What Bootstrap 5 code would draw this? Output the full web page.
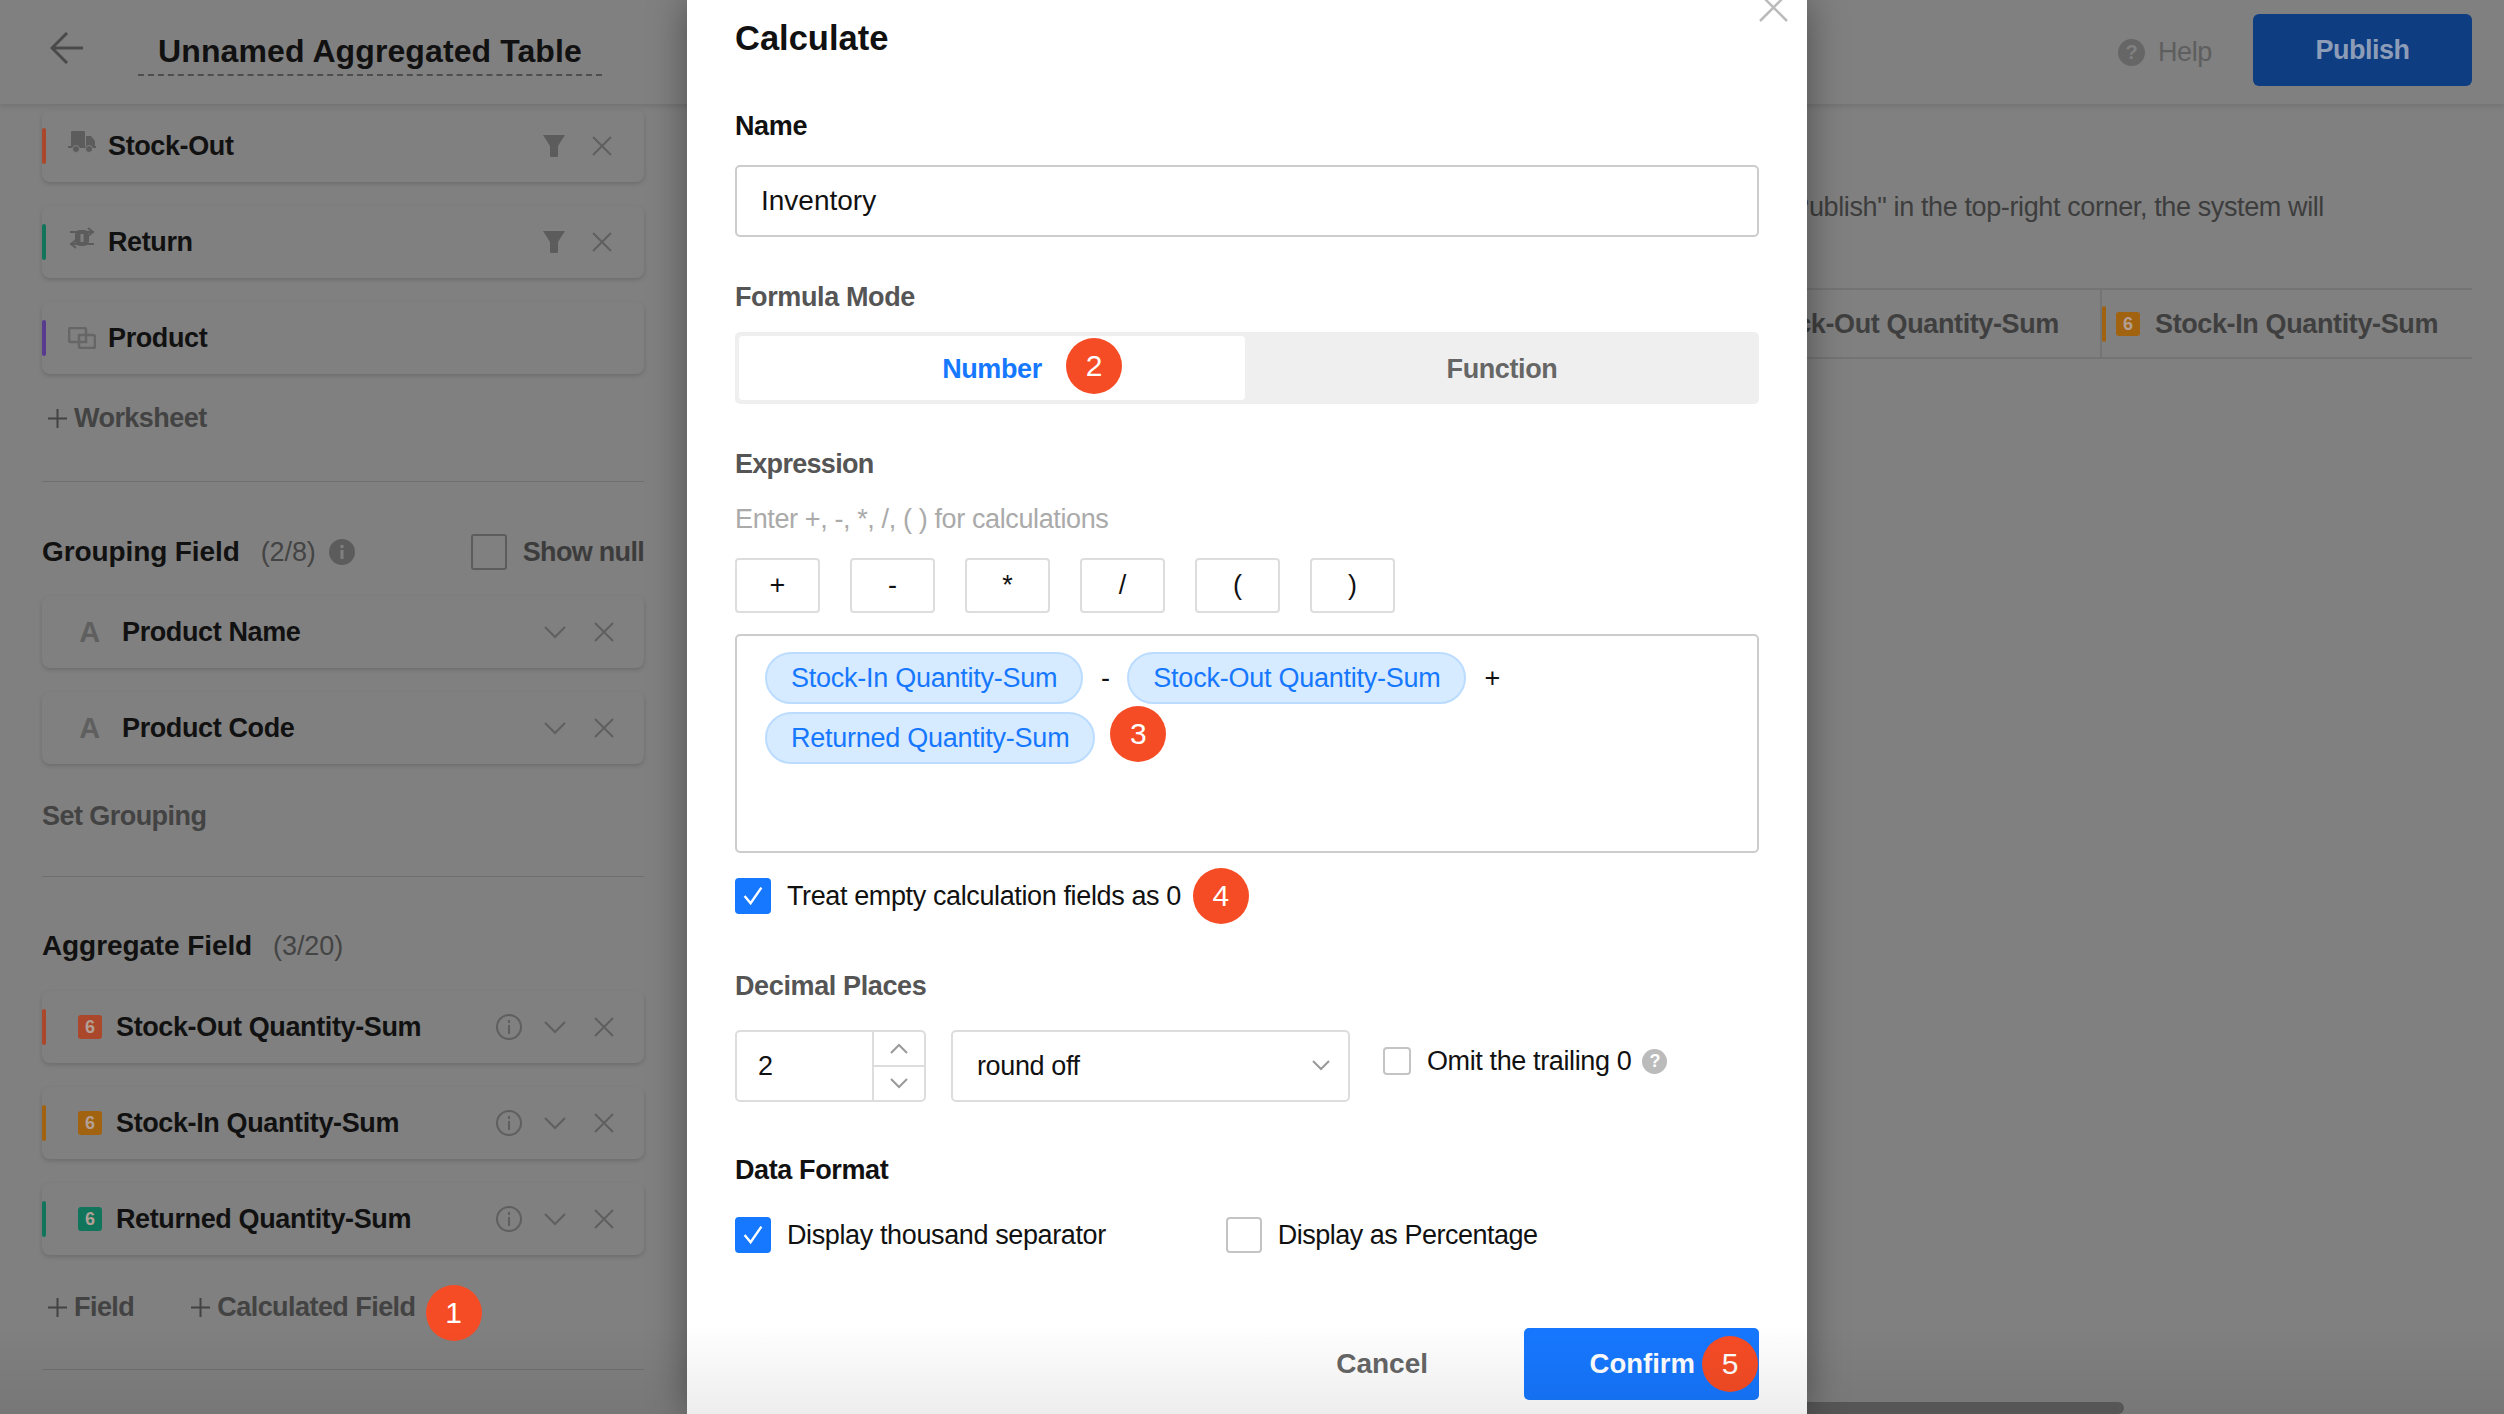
<!DOCTYPE html>
<html lang="en">
<head>
  <meta charset="UTF-8">
  <meta name="viewport" content="width=device-width, initial-scale=1.0">
  <title>Unnamed Aggregated Table</title>
  <link rel="stylesheet" href="https://cdn.jsdelivr.net/npm/bootstrap@5.3.0/dist/css/bootstrap.min.css" />
  <style>
    html, body { width: 2504px; height: 1414px; overflow: hidden; }
    body {
      position: relative;
      font-family: "Liberation Sans", Arial, sans-serif;
      font-size: 27px;
      line-height: 36px;
      letter-spacing: -.38px;
      background: #808080;
      color: #111;
    }

    /* top bar */
    .top-bar {
      height: 104px;
      padding: 0 32px 0 50px;
      box-shadow: 0 2px 6px rgba(0, 0, 0, .12);
      position: relative;
      z-index: 1;
    }
    .back-arrow { width: 33px; height: 32px; margin-top: -9px; margin-right: 55px; }
    .table-title {
      width: 464px;
      height: 48px;
      line-height: 46px;
      font-size: 32px;
      font-weight: 700;
      letter-spacing: .1px;
      text-align: center;
      border-bottom: 2px dashed #4e4e4e;
    }
    .help-link { color: #5e5e5e; margin-right: 41px; gap: 13px; }
    .help-dot {
      width: 27px; height: 27px;
      border-radius: 50%;
      background: #666;
      color: #808080;
      font-size: 20px;
      font-weight: 700;
      line-height: 27px;
      text-align: center;
    }
    .publish-btn {
      width: 219px; height: 72px;
      margin-top: -4px;
      background: #0f3d82;
      border: 0;
      border-radius: 6px;
      color: #8d9db8;
      font-size: 27px;
      font-weight: 700;
      letter-spacing: -.5px;
    }

    /* left column */
    .side-col { width: 687px; flex: none; padding: 6px 43px 0 42px; }
    .field-card {
      height: 72px;
      margin-bottom: 24px;
      background: #808080;
      border: 0;
      border-radius: 8px;
      box-shadow: 0 2px 4px rgba(0, 0, 0, .16);
      font-weight: 700;
      flex-direction: row;
      align-items: center;
    }
    .field-list .field-card:last-child { margin-bottom: 0; }
    .edge-bar { width: 4px; height: 36px; flex: none; border-radius: 2px; }
    .edge-red { background: #ab472b; }
    .edge-green { background: #11755c; }
    .edge-purple { background: #583b8e; }
    .edge-orange { background: #a1630f; }
    .src-icon { width: 28px; height: 22px; flex: none; margin: 0 12px 0 22px; }
    .src-up { margin-top: -8px; }
    .type-a { width: 21px; margin: 0 22px 0 37px; color: #5f5f5f; font-size: 29px; text-align: center; }
    .num-chip {
      width: 24px; height: 24px;
      flex: none;
      border-radius: 3px;
      font-size: 18px;
      font-weight: 700;
      letter-spacing: 0;
      line-height: 24px;
      text-align: center;
      color: #b39f95;
    }
    .chip-red { background: #ab472b; }
    .chip-orange { background: #a1630f; }
    .chip-green { background: #11755c; }
    .field-card .num-chip { margin: 0 14px 0 32px; }
    .card-tools { margin-left: auto; padding-right: 30px; gap: 28px; }
    .card-tools.filter-tools { padding-right: 32px; gap: 26px; }
    .tool-x { width: 20px; height: 20px; }
    .tool-chev { width: 22px; height: 13px; }
    .tool-funnel { width: 22px; height: 22px; margin-right: 1px; }
    .tool-info { width: 26px; height: 26px; margin-right: -6px; }
    .add-link { color: #434343; font-weight: 700; letter-spacing: -.55px; }
    .add-plus { width: 19px; height: 19px; margin: 0 7px 0 6px; }
    .add-plus.second { margin-left: 57px; }
    .side-rule { border-top: 1px solid #6f6f6f; }
    .head-row { height: 36px; margin-top: 52px; margin-bottom: 26px; font-size: 28px; font-weight: 700; letter-spacing: -.1px; }
    .head-row.tight { margin-top: 51px; margin-bottom: 27px; }
    .head-count { color: #444; margin-left: 21px; font-size: 27px; font-weight: 400; }
    .solid-info { width: 26px; height: 26px; margin-left: 13px; }
    .show-null { margin-left: auto; color: #3c3c3c; gap: 16px; font-size: 27px; letter-spacing: -.7px; }
    .null-box { width: 36px; height: 36px; border: 2px solid #5c5c5c; border-radius: 3px; }
    .work-link { margin-top: 26px; }
    .work-rule { margin-top: 45px; }
    .group-link { margin-top: 34px; }
    .group-rule { margin-top: 42px; }
    .agg-links { margin-top: 34px; height: 36px; }
    .agg-rule { margin-top: 44px; }

    /* right column */
    .main-col { flex: 1; min-width: 0; overflow: hidden; padding-top: 85px; }
    .intro-line { padding-right: 180px; text-align: right; color: #3d3d3d; white-space: nowrap; }
    .col-heads {
      height: 71px;
      margin: 63px 32px 0 0;
      border-top: 2px solid #747474;
      border-bottom: 2px solid #747474;
      font-weight: 700;
      color: #3f3f3f;
      justify-content: flex-end;
    }
    .col-head { width: 372px; flex: none; border-left: 2px solid #747474; white-space: nowrap; }
    .col-head .num-chip { margin: 0 15px 0 10px; }
    .col-head-first { padding-right: 41px; }
    .page-scroll {
      position: absolute;
      left: 1700px; bottom: 0;
      width: 424px; height: 12px;
      border-radius: 0 6px 6px 0;
      background: #5c5c5c;
    }

    /* dialog */
    .calc-dialog {
      position: absolute;
      left: 687px; top: 0;
      width: 1120px; height: 1414px;
      padding: 20px 48px 0;
      background: #fff;
      border: 0;
      border-radius: 0;
      box-shadow: 0 0 36px rgba(0, 0, 0, .4);
      z-index: 2;
      color: #111;
    }
    .dialog-x { position: absolute; right: 19px; top: -7px; width: 29px; height: 29px; }
    .dialog-title { font-size: 34.5px; font-weight: 700; letter-spacing: 0; }
    .dlg-label { font-weight: 700; }
    .dlg-label.soft { color: #555; }
    .name-label { margin-top: 52px; }
    .form-control.name-box {
      height: 72px;
      margin-top: 21px;
      padding: 16px 24px;
      border: 2px solid #ccc;
      border-radius: 5px;
      font-size: 28px;
      line-height: 36px;
      letter-spacing: 0;
      color: #111;
    }
    .mode-label { margin-top: 42px; }
    .mode-switch { height: 72px; margin-top: 17px; padding: 4px; background: #efefef; border-radius: 5px; font-weight: 700; }
    .mode-on {
      position: relative;
      width: 506px;
      padding-top: 2px;
      background: #fff;
      border-radius: 4px;
      color: #1677ff;
    }
    .mode-off { flex: 1; padding: 2px 0 0 4px; color: #666; }
    .anno {
      width: 56px; height: 56px;
      flex: none;
      border-radius: 50%;
      background: #f64c25;
      color: #fff;
      font-size: 30px;
      font-weight: 400;
      letter-spacing: 0;
      line-height: 56px;
      text-align: center;
    }
    .anno-one { margin: -4px 0 -16px 10px; }
    .anno-two { position: absolute; left: 327px; top: 2px; }
    .expr-label { margin-top: 42px; letter-spacing: -.7px; }
    .expr-hint { margin-top: 19px; color: #aaa; }
    .op-row { margin-top: 21px; gap: 30px; }
    .op-btn {
      width: 85px; height: 55px;
      padding: 0;
      background: #fff;
      border: 2px solid #ddd;
      border-radius: 4px;
      font-size: 27px;
      line-height: 1;
      color: #111;
    }
    .expr-box {
      height: 219px;
      margin-top: 21px;
      padding: 16px 28px;
      border: 2px solid #ccc;
      border-radius: 5px;
      row-gap: 8px;
      align-content: flex-start;
    }
    .expr-tag {
      height: 52px;
      padding: 0 24px;
      background: #d6ebff;
      border: 2px solid #bcdcff;
      border-radius: 26px;
      color: #1677ff;
      letter-spacing: -.25px;
      line-height: 48px;
      white-space: nowrap;
    }
    .expr-op { width: 44px; text-align: center; }
    .expr-op.last { width: auto; margin-left: 18px; }
    .anno-three { margin: -10px 0 -10px 15px; transform: translateY(-4px); }
    .form-check-input.blue-check {
      width: 36px; height: 36px;
      margin: 0;
      flex: none;
      border: 2px solid #c4c4c4;
      border-radius: 4px;
      float: none;
    }
    .form-check-input.blue-check:checked {
      background-color: #1677ff;
      border-color: #1677ff;
      background-size: 24px;
      background-image: url("data:image/svg+xml,%3csvg xmlns='http://www.w3.org/2000/svg' viewBox='0 0 20 20'%3e%3cpath fill='none' stroke='%23fff' stroke-width='2' d='M3 10l5 6 9-13'/%3e%3c/svg%3e");
    }
    .form-check-input.blue-check.small-box { width: 28px; height: 28px; }
    .treat-row { margin-top: 25px; gap: 16px; }
    .anno-four { margin: -10px 0 -10px -4px; }
    .decimal-label { margin-top: 54px; }
    .decimal-row { margin-top: 26px; height: 72px; }
    .stepper { width: 191px; border: 2px solid #ddd; border-radius: 5px; }
    .stepper-value { flex: 1; padding-left: 21px; align-self: center; }
    .stepper-btns { width: 52px; border-left: 2px solid #ddd; }
    .stepper-btn { flex: 1; }
    .stepper-btn + .stepper-btn { border-top: 2px solid #ddd; }
    .stepper-btn svg { width: 18px; height: 11px; }
    .form-select.round-box {
      width: 399px; height: 72px;
      margin-left: 25px;
      padding: 0 18px 0 24px;
      background-image: none;
      border: 2px solid #ddd;
      border-radius: 5px;
      font-size: 27px;
      line-height: 36px;
      color: #111;
    }
    .round-box svg { width: 18px; height: 11px; margin-top: -2px; }
    .omit-row { margin: -10px 0 0 33px; gap: 16px; }
    .help-soft { width: 25px; height: 25px; margin-left: -5px; border-radius: 50%; background: #bbb; color: #fff; font-size: 18px; font-weight: 700; line-height: 25px; text-align: center; }
    .format-label { margin-top: 50px; }
    .format-row { margin-top: 29px; }
    .format-item { gap: 16px; }
    .format-item + .format-item { margin-left: 120px; gap: 16px; letter-spacing: -.5px; }
    .dialog-foot { margin-top: 75px; }
    .cancel-btn { margin-right: 96px; padding: 0; border: 0; color: #666; font-size: 28px; font-weight: 700; letter-spacing: 0; }
    .confirm-btn {
      width: 235px; height: 72px;
      padding: 0 1px 0 0;
      gap: 7px;
      background: #1677ff;
      border: 0;
      border-radius: 5px;
      color: #fff;
      font-size: 27.5px;
      font-weight: 700;
      letter-spacing: 0;
    }
    .page-fade {
      position: absolute;
      left: 0; right: 0; bottom: 0;
      height: 90px;
      background: linear-gradient(to bottom, rgba(0, 0, 0, 0), rgba(0, 0, 0, .07));
      pointer-events: none;
      z-index: 3;
    }
  </style>
</head>
<body>
<!-- Top bar -->
<header class="top-bar d-flex align-items-center">
  <svg class="back-arrow" viewBox="0 0 33 32" fill="none" stroke="#4a4a4a" stroke-width="3"><path d="M33 16H2M17 1L2 16l15 15"/></svg>
  <div class="table-title">Unnamed Aggregated Table</div>
  <div class="help-link d-flex align-items-center ms-auto"><span class="help-dot">?</span><span>Help</span></div>
  <button class="btn publish-btn" type="button">Publish</button>
</header>

<div class="d-flex">
  <!-- Left settings column -->
  <aside class="side-col">
    <div class="field-list">
      <div class="card field-card">
        <span class="edge-bar edge-red"></span>
        <svg class="src-icon src-up" viewBox="0 0 28 22" fill="#5c5c5c"><rect x="3" y="0" width="14" height="16" rx="1"/><path d="M18 5h5l4 5v6h-9z"/><rect x="0" y="15" width="28" height="2"/><circle cx="8" cy="18" r="3.5" stroke="#808080"/><circle cx="21" cy="18" r="3.5" stroke="#808080"/></svg>
        <span>Stock-Out</span>
        <div class="card-tools filter-tools d-flex align-items-center">
          <svg class="tool-funnel" viewBox="0 0 22 22" fill="#5c5c5c"><path d="M0 0h22l-7 11v10a1 1 0 0 1-1 1H8a1 1 0 0 1-1-1V11z"/></svg>
          <svg class="tool-x" viewBox="0 0 20 20" stroke="#5f5f5f" stroke-width="2"><path d="M1 1l18 18M19 1L1 19"/></svg>
        </div>
      </div>
      <div class="card field-card">
        <span class="edge-bar edge-green"></span>
        <svg class="src-icon src-up" viewBox="0 0 28 22" fill="#5c5c5c"><rect x="7" y="3" width="14" height="16" rx="5"/><rect x="12.5" y="7" width="3" height="8" fill="#808080"/><path d="M2 5h22M20 1l5 4-5 4M26 17H4M8 13l-5 4 5 4" fill="none" stroke="#5c5c5c" stroke-width="2"/></svg>
        <span>Return</span>
        <div class="card-tools filter-tools d-flex align-items-center">
          <svg class="tool-funnel" viewBox="0 0 22 22" fill="#5c5c5c"><path d="M0 0h22l-7 11v10a1 1 0 0 1-1 1H8a1 1 0 0 1-1-1V11z"/></svg>
          <svg class="tool-x" viewBox="0 0 20 20" stroke="#5f5f5f" stroke-width="2"><path d="M1 1l18 18M19 1L1 19"/></svg>
        </div>
      </div>
      <div class="card field-card">
        <span class="edge-bar edge-purple"></span>
        <svg class="src-icon" viewBox="0 0 28 22" fill="none" stroke="#666" stroke-width="2.6"><path d="M11 15H3a2 2 0 0 1-2-2V3a2 2 0 0 1 2-2h13a2 2 0 0 1 2 2v5"/><path d="M18 8h7a2 2 0 0 1 2 2v9a2 2 0 0 1-2 2H13a2 2 0 0 1-2-2V8h7v7h-7"/></svg>
        <span>Product</span>
      </div>
    </div>
    <div class="add-link work-link d-flex align-items-center">
      <svg class="add-plus" viewBox="0 0 19 19" stroke="#434343" stroke-width="2"><path d="M9.5 0v19M0 9.5h19"/></svg><span>Worksheet</span>
    </div>
    <div class="side-rule work-rule"></div>

    <div class="head-row d-flex align-items-center">
      <span>Grouping Field</span><span class="head-count">(2/8)</span>
      <svg class="solid-info" viewBox="0 0 26 26"><circle cx="13" cy="13" r="13" fill="#5c5c5c"/><path d="M11.5 11h3v9h-3zM11.5 6h3v3h-3z" fill="#808080"/></svg>
      <div class="show-null d-flex align-items-center"><span class="null-box"></span><span>Show null</span></div>
    </div>
    <div class="field-list">
      <div class="card field-card">
        <span class="type-a">A</span><span>Product Name</span>
        <div class="card-tools d-flex align-items-center">
          <svg class="tool-chev" viewBox="0 0 22 13" fill="none" stroke="#5f5f5f" stroke-width="2"><path d="M1 1l10 10L21 1"/></svg>
          <svg class="tool-x" viewBox="0 0 20 20" stroke="#5f5f5f" stroke-width="2"><path d="M1 1l18 18M19 1L1 19"/></svg>
        </div>
      </div>
      <div class="card field-card">
        <span class="type-a">A</span><span>Product Code</span>
        <div class="card-tools d-flex align-items-center">
          <svg class="tool-chev" viewBox="0 0 22 13" fill="none" stroke="#5f5f5f" stroke-width="2"><path d="M1 1l10 10L21 1"/></svg>
          <svg class="tool-x" viewBox="0 0 20 20" stroke="#5f5f5f" stroke-width="2"><path d="M1 1l18 18M19 1L1 19"/></svg>
        </div>
      </div>
    </div>
    <div class="add-link group-link">Set Grouping</div>
    <div class="side-rule group-rule"></div>

    <div class="head-row tight d-flex align-items-center">
      <span>Aggregate Field</span><span class="head-count">(3/20)</span>
    </div>
    <div class="field-list">
      <div class="card field-card">
        <span class="edge-bar edge-red"></span><span class="num-chip chip-red">6</span><span>Stock-Out Quantity-Sum</span>
        <div class="card-tools d-flex align-items-center">
          <svg class="tool-info" viewBox="0 0 26 26" fill="none" stroke="#5f5f5f" stroke-width="2"><circle cx="13" cy="13" r="12"/><path d="M13 11v9M13 6v3"/></svg>
          <svg class="tool-chev" viewBox="0 0 22 13" fill="none" stroke="#5f5f5f" stroke-width="2"><path d="M1 1l10 10L21 1"/></svg>
          <svg class="tool-x" viewBox="0 0 20 20" stroke="#5f5f5f" stroke-width="2"><path d="M1 1l18 18M19 1L1 19"/></svg>
        </div>
      </div>
      <div class="card field-card">
        <span class="edge-bar edge-orange"></span><span class="num-chip chip-orange">6</span><span>Stock-In Quantity-Sum</span>
        <div class="card-tools d-flex align-items-center">
          <svg class="tool-info" viewBox="0 0 26 26" fill="none" stroke="#5f5f5f" stroke-width="2"><circle cx="13" cy="13" r="12"/><path d="M13 11v9M13 6v3"/></svg>
          <svg class="tool-chev" viewBox="0 0 22 13" fill="none" stroke="#5f5f5f" stroke-width="2"><path d="M1 1l10 10L21 1"/></svg>
          <svg class="tool-x" viewBox="0 0 20 20" stroke="#5f5f5f" stroke-width="2"><path d="M1 1l18 18M19 1L1 19"/></svg>
        </div>
      </div>
      <div class="card field-card">
        <span class="edge-bar edge-green"></span><span class="num-chip chip-green">6</span><span>Returned Quantity-Sum</span>
        <div class="card-tools d-flex align-items-center">
          <svg class="tool-info" viewBox="0 0 26 26" fill="none" stroke="#5f5f5f" stroke-width="2"><circle cx="13" cy="13" r="12"/><path d="M13 11v9M13 6v3"/></svg>
          <svg class="tool-chev" viewBox="0 0 22 13" fill="none" stroke="#5f5f5f" stroke-width="2"><path d="M1 1l10 10L21 1"/></svg>
          <svg class="tool-x" viewBox="0 0 20 20" stroke="#5f5f5f" stroke-width="2"><path d="M1 1l18 18M19 1L1 19"/></svg>
        </div>
      </div>
    </div>
    <div class="add-link agg-links d-flex align-items-center">
      <svg class="add-plus" viewBox="0 0 19 19" stroke="#434343" stroke-width="2"><path d="M9.5 0v19M0 9.5h19"/></svg><span>Field</span>
      <svg class="add-plus second" viewBox="0 0 19 19" stroke="#434343" stroke-width="2"><path d="M9.5 0v19M0 9.5h19"/></svg><span>Calculated Field</span>
      <span class="anno anno-one">1</span>
    </div>
    <div class="side-rule agg-rule"></div>
  </aside>

  <!-- Preview column -->
  <main class="main-col">
    <div class="intro-line">After you click "Publish" in the top-right corner, the system will</div>
    <div class="col-heads d-flex">
      <div class="col-head col-head-first d-flex align-items-center justify-content-end">
        <span>Stock-Out Quantity-Sum</span>
      </div>
      <div class="col-head d-flex align-items-center">
        <span class="edge-bar edge-orange"></span><span class="num-chip chip-orange">6</span><span>Stock-In Quantity-Sum</span>
      </div>
    </div>
  </main>
</div>
<div class="page-scroll"></div>

<!-- Calculate dialog -->
<section class="modal-content calc-dialog">
  <svg class="dialog-x" viewBox="0 0 29 29" stroke="#bbb" stroke-width="2.5"><path d="M1 1l27 27M28 1L1 28"/></svg>
  <div class="dialog-title">Calculate</div>

  <div class="dlg-label name-label">Name</div>
  <div class="form-control name-box">Inventory</div>

  <div class="dlg-label soft mode-label">Formula Mode</div>
  <div class="mode-switch d-flex">
    <div class="mode-on d-flex align-items-center justify-content-center">Number<span class="anno anno-two">2</span></div>
    <div class="mode-off d-flex align-items-center justify-content-center">Function</div>
  </div>

  <div class="dlg-label soft expr-label">Expression</div>
  <div class="expr-hint">Enter +, -, *, /, ( ) for calculations</div>
  <div class="op-row d-flex">
    <button class="btn op-btn" type="button">+</button>
    <button class="btn op-btn" type="button">-</button>
    <button class="btn op-btn" type="button">*</button>
    <button class="btn op-btn" type="button">/</button>
    <button class="btn op-btn" type="button">(</button>
    <button class="btn op-btn" type="button">)</button>
  </div>
  <div class="expr-box d-flex flex-wrap align-items-center">
    <span class="expr-tag">Stock-In Quantity-Sum</span>
    <span class="expr-op">-</span>
    <span class="expr-tag">Stock-Out Quantity-Sum</span>
    <span class="expr-op last">+</span>
    <span class="expr-tag">Returned Quantity-Sum</span>
    <span class="anno anno-three">3</span>
  </div>
  <div class="treat-row d-flex align-items-center">
    <input class="form-check-input blue-check" type="checkbox" checked>
    <span>Treat empty calculation fields as 0</span>
    <span class="anno anno-four">4</span>
  </div>

  <div class="dlg-label soft decimal-label">Decimal Places</div>
  <div class="decimal-row d-flex align-items-center">
    <div class="stepper d-flex h-100">
      <span class="stepper-value">2</span>
      <div class="stepper-btns d-flex flex-column">
        <div class="stepper-btn d-flex align-items-center justify-content-center"><svg viewBox="0 0 18 11" fill="none" stroke="#999" stroke-width="2"><path d="M1 10l8-8 8 8"/></svg></div>
        <div class="stepper-btn d-flex align-items-center justify-content-center"><svg viewBox="0 0 18 11" fill="none" stroke="#999" stroke-width="2"><path d="M1 1l8 8 8-8"/></svg></div>
      </div>
    </div>
    <div class="form-select round-box d-flex align-items-center justify-content-between">
      <span>round off</span>
      <svg viewBox="0 0 18 11" fill="none" stroke="#999" stroke-width="2"><path d="M1 1l8 8 8-8"/></svg>
    </div>
    <div class="omit-row d-flex align-items-center">
      <input class="form-check-input blue-check small-box" type="checkbox">
      <span>Omit the trailing 0</span>
      <span class="help-soft">?</span>
    </div>
  </div>

  <div class="dlg-label format-label">Data Format</div>
  <div class="format-row d-flex">
    <div class="format-item d-flex align-items-center">
      <input class="form-check-input blue-check" type="checkbox" checked>
      <span>Display thousand separator</span>
    </div>
    <div class="format-item d-flex align-items-center">
      <input class="form-check-input blue-check" type="checkbox">
      <span>Display as Percentage</span>
    </div>
  </div>

  <div class="dialog-foot d-flex justify-content-end align-items-center">
    <button class="btn cancel-btn" type="button">Cancel</button>
    <button class="btn confirm-btn d-flex align-items-center justify-content-end" type="button">Confirm<span class="anno">5</span></button>
  </div>
</section>
<div class="page-fade"></div>

<script src="https://cdn.jsdelivr.net/npm/bootstrap@5.3.0/dist/js/bootstrap.bundle.min.js"></script>
</body>
</html>
